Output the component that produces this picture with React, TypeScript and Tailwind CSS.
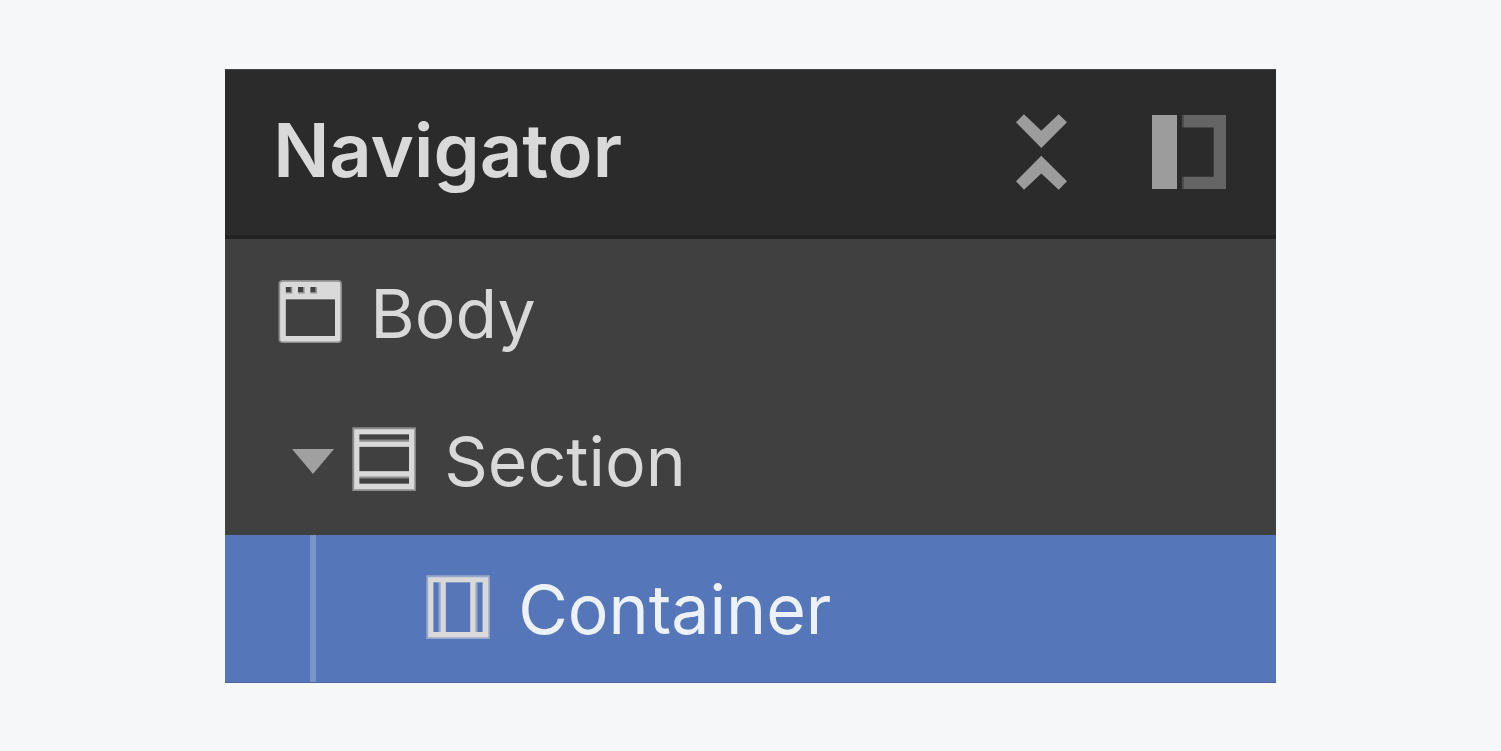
import { useState } from 'react';

type NodeKind = 'body' | 'section' | 'container';

interface TreeNode {
    kind: NodeKind;
    name: string;
}

const CollapseIcon = () => (
    <svg className="w-[52px] h-[78px]" viewBox="0 0 52 78" fill="#9c9c9c">
        <path d="M1 9.3L9 1.2L26.3 17.8L43.7 1.2L52 9.3L26.3 35Z" />
        <path d="M26.3 42.7L52 68.3L43.7 76.7L26.3 60.5L9 76.7L1 68.3Z" />
    </svg>
);

const DockIcon = () => (
    <svg className="w-[74px] h-[74px]" viewBox="0 0 74 74">
        <rect width="25" height="74" fill="#9c9c9c" />
        <path d="M30 0H32V12.5H30ZM30 61.7H32V74H30Z" fill="#4e4e4e" />
        <path d="M32 0H74V74H32V61.7H61.7V12.5H32Z" fill="#656565" />
    </svg>
);

const CaretIcon = () => (
    <svg className="w-[42px] h-[25px]" viewBox="0 0 42 25" fill="#a0a0a0">
        <path d="M0 0H42L21 25Z" />
    </svg>
);

const NodeIcon = ({ kind }: { kind: NodeKind }) => {
    if (kind === 'body') {
        return (
            <svg className="w-16 h-16" viewBox="0 0 64 64" fill="#d9d9d9" fillRule="evenodd">
                <path opacity=".5" d="M4 1H60A4 4 0 0 1 64 5V60A4 4 0 0 1 60 64H4A4 4 0 0 1 .5 60V5A4 4 0 0 1 4 1ZM7.7 20.3V57H57V20.3ZM7.7 7.9V13H12.7V7.9ZM20 7.9V13H25V7.9ZM32.3 7.9V13H37.3V7.9Z" />
                <path d="M4.5 2.7H60A2.3 2.3 0 0 1 62.3 5V60.3A2.3 2.3 0 0 1 60 62.6H4.5A2.3 2.3 0 0 1 2.2 60.3V5A2.3 2.3 0 0 1 4.5 2.7ZM7.7 20.3V57H57V20.3ZM7.7 7.9V14.5H14.3V7.9ZM20 7.9V14.5H26.6V7.9ZM32.3 7.9V14.5H38.9V7.9Z" />
            </svg>
        );
    }
    // the section frame turned on its side is the container frame
    return (
        <svg className="w-16 h-16" viewBox="0 0 64 64" fill="#d9d9d9" fillRule="evenodd">
            <g transform={kind === 'container' ? 'matrix(0 1 1 0 0 0)' : undefined}>
                <path opacity=".5" d="M.3 .3H63.9V63.9H.3ZM7.3 7.3V12.5H57V7.3ZM7.3 19.7V44.3H57V19.7ZM7.3 51.5V56.7H57V51.5Z" />
                <path d="M2.2 2.2H62.3V62.3H2.2ZM7.3 7.3V14.7H57V7.3ZM7.3 19.7V44.3H57V19.7ZM7.3 49.4V56.7H57V49.4Z" />
            </g>
        </svg>
    );
};

const NodeLabel = ({ node, selected, onSelect }: { node: TreeNode, selected: boolean, onSelect: (kind: NodeKind) => void }) => (
    <button className={"flex grow items-center gap-7 text-left " + (selected ? "text-[#edf1f8]" : "text-[#d9d9d9]")} onClick={() => onSelect(node.kind)}>
        <span className="mb-1"><NodeIcon kind={node.kind} /></span>
        <span className="text-[68px] leading-[80px]">{node.name}</span>
    </button>
);

const rowClass = (selected: boolean) => "flex h-37 pl-[53px] " + (selected ? "bg-[#5576b9] border-b border-[#4b659c]" : "");

const App = () => {
    const [open, setOpen] = useState(true);
    const [selected, setSelected] = useState<NodeKind>('container');

    return (
        <main className="min-h-screen bg-[#f6f7f9] pt-[69px] pb-[68px]">
            <section className="w-[70%] mx-auto bg-[#404040] font-['Inter',sans-serif]">
                <header className="flex items-center justify-between h-[170px] pl-12 pr-[50px] pb-[2px] bg-[#2b2b2b] border-t border-t-[#444444] border-b-4 border-b-[#222222]">
                    <h1 className="pb-1 text-[74px] leading-[88px] font-semibold text-[#d9d9d9]">Navigator</h1>
                    <div className="flex items-center gap-[85px]">
                        <button aria-label="Collapse all" onClick={() => setOpen(!open)}><CollapseIcon /></button>
                        <button aria-label="Dock panel"><DockIcon /></button>
                    </div>
                </header>
                <ul>
                    <li className={rowClass(selected === 'body')}>
                        <NodeLabel node={{ kind: 'body', name: 'Body' }} selected={selected === 'body'} onSelect={setSelected} />
                    </li>
                    <li className={rowClass(selected === 'section')}>
                        <button className="flex items-center w-[74px] pl-[14px]" aria-label="Toggle section" aria-expanded={open} onClick={() => setOpen(!open)}>
                            <CaretIcon />
                        </button>
                        <NodeLabel node={{ kind: 'section', name: 'Section' }} selected={selected === 'section'} onSelect={setSelected} />
                    </li>
                    {open && (
                        <li className={rowClass(selected === 'container')}>
                            <div className="w-37 pl-8">
                                <div className="w-[6px] h-full bg-[#7b93c7]"></div>
                            </div>
                            <NodeLabel node={{ kind: 'container', name: 'Container' }} selected={selected === 'container'} onSelect={setSelected} />
                        </li>
                    )}
                </ul>
            </section>
        </main>
    );
}

export default App;
